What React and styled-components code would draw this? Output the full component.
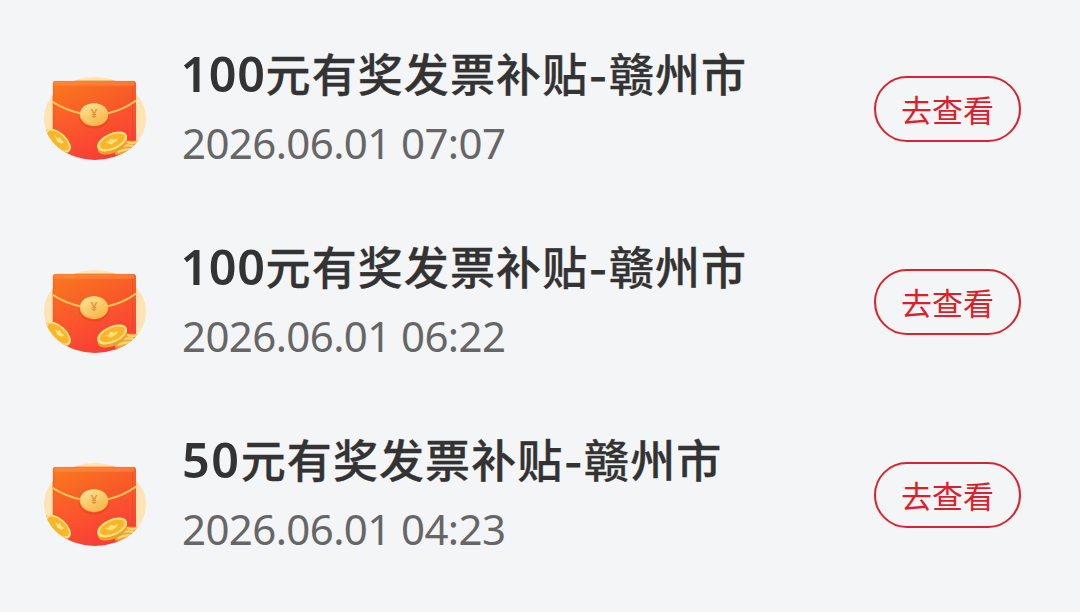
import React from 'react';
import styled, { createGlobalStyle } from 'styled-components';

const GlobalStyle = createGlobalStyle`
  body {
    margin: 0;
    background: #f4f5f7;
    font-family: 'Noto Sans', 'Noto Sans CJK SC', sans-serif;
  }
`;

const List = styled.div`
  box-sizing: border-box;
  height: 612px;
  padding: 31px 59px 0 44px;
  overflow: hidden;
`;

const Row = styled.div`
  display: flex;
  align-items: center;
  height: 156px;
  margin-bottom: 37px;
`;

const Packet = styled.svg`
  flex: none;
  width: 102px;
  height: 83px;
  margin-top: 19px;
`;

const Info = styled.div`
  flex: 1;
  padding-left: 36px;
  white-space: nowrap;
`;

const Title = styled.div`
  height: 68px;
  line-height: 64px;
  font-family: 'Noto Sans CJK SC', sans-serif;
  font-size: 45px;
  font-weight: 500;
  letter-spacing: 1.1px;
  color: #333;
  -webkit-text-stroke: 0.3px #333;
`;

const Amount = styled.span`
  margin-left: ${({ $long }) => ($long ? '-1.5px' : '0')};
  font-family: 'Noto Sans', sans-serif;
  font-size: 48.5px;
  font-weight: 600;
  letter-spacing: ${({ $long }) => ($long ? '0.6px' : '1.6px')};
  -webkit-text-stroke: 0;
`;

const Dash = styled.span`
  font-family: Inter, sans-serif;
  font-size: 42px;
  font-weight: 600;
  -webkit-text-stroke: 0;
`;

const Time = styled.div`
  height: 68px;
  line-height: 68px;
  font-size: 42px;
  letter-spacing: -0.6px;
  color: #666;
`;

const ViewButton = styled.button`
  box-sizing: border-box;
  flex: none;
  width: 147px;
  height: 66px;
  padding: 0 0 1px;
  border: 2px solid #d9232e;
  border-radius: 33px;
  background: transparent;
  font-family: 'Noto Sans CJK SC', sans-serif;
  font-size: 31px;
  line-height: 60px;
  color: #dc1f2a;
`;

const CoinMark = styled.text`
  font-family: 'Noto Sans', sans-serif;
  font-size: 35px;
  font-weight: 600;
  text-anchor: middle;
  fill: #e9923c;
`;

const RedPacket = ({ id }) => (
  <Packet viewBox="27 36 306 250" preserveAspectRatio="none">
    <defs>
      <linearGradient id={`${id}-body`} x1="0.2" y1="0" x2="0.6" y2="1">
        <stop offset="0" stopColor="#fb7420" />
        <stop offset="0.45" stopColor="#fb5a2b" />
        <stop offset="1" stopColor="#fa3938" />
      </linearGradient>
      <linearGradient id={`${id}-flap`} x1="0" y1="0" x2="1" y2="0.7">
        <stop offset="0" stopColor="#fb7c1c" />
        <stop offset="1" stopColor="#f4512a" />
      </linearGradient>
      <linearGradient id={`${id}-coin`} x1="0" y1="0" x2="0.7" y2="1">
        <stop offset="0" stopColor="#ffe89c" />
        <stop offset="1" stopColor="#f8b74a" />
      </linearGradient>
      <clipPath id={`${id}-clip`}>
        <ellipse cx="180" cy="161" rx="153" ry="125" />
        <rect x="53" y="47" width="250" height="110" rx="9" />
      </clipPath>
    </defs>
    <ellipse cx="180" cy="161" rx="153" ry="125" fill="#fee3b4" />
    <g clipPath={`url(#${id}-clip)`}>
      <rect x="53" y="47" width="250" height="250" rx="9" fill={`url(#${id}-body)`} />
      <path
        d="M53 113V56q0-9 9-9H294q9 0 9 9V108Q180 190 53 113Z"
        fill={`url(#${id}-flap)`}
        opacity="0.6"
      />
      <rect x="58" y="49" width="240" height="13" rx="4" fill="#ff9d59" opacity="0.4" />
      <path d="M293 62V285" stroke="#d63c2c" strokeWidth="2" opacity="0.5" />
      <path d="M57 62V285" stroke="#d63c2c" strokeWidth="2" opacity="0.3" />
      <path d="M53 111Q95 138 140 146" fill="none" stroke="#fbc355" strokeWidth="6" />
      <path d="M216 146Q264 135 303 107" fill="none" stroke="#fbc355" strokeWidth="6" />
      <ellipse cx="177" cy="156" rx="46" ry="36" fill="#d3351e" opacity="0.3" />
      <ellipse cx="177" cy="150" rx="43" ry="34" fill="#f4b64d" />
      <ellipse cx="177" cy="147" rx="41" ry="32" fill={`url(#${id}-coin)`} />
      <CoinMark x="177" y="161">¥</CoinMark>
      <g transform="rotate(42 70 228)">
        <ellipse cx="68" cy="233" rx="48" ry="25" fill="#e99a27" />
        <ellipse cx="69" cy="228" rx="47" ry="24" fill="#fde184" />
        <ellipse cx="69" cy="228" rx="40" ry="19" fill="#fab629" />
        <path d="M52 224L63 223L67 217L76 221L86 219L83 228L70 232Z" fill="#ffe28a" />
      </g>
      <path d="M242 239L278 228H310V270H240Z" fill="#f3a432" />
      <path
        d="M276 231Q290 239 309 231M252 249Q274 236 306 247M248 262Q280 247 306 259"
        fill="none"
        stroke="#fcd66f"
        strokeWidth="7"
      />
      <g transform="rotate(-24 232 232)">
        <ellipse cx="229" cy="239" rx="47" ry="25" fill="#ee9f2e" />
        <ellipse cx="232" cy="230" rx="48" ry="25" fill="#fce17e" />
        <ellipse cx="233" cy="230" rx="40" ry="19" fill="#fab52b" />
        <path d="M211 223L222 226L232 220L238 227L252 227L245 235L226 237Z" fill="#ffe07a" />
      </g>
    </g>
  </Packet>
);

const records = [
  { amount: 100, time: '2026.06.01 07:07' },
  { amount: 100, time: '2026.06.01 06:22' },
  { amount: 50, time: '2026.06.01 04:23' },
];

const App = () => (
  <>
    <GlobalStyle />
    <List>
      {records.map(({ amount, time }, index) => (
        <Row key={time}>
          <RedPacket id={`packet-${index}`} />
          <Info>
            <Title>
              <Amount $long={amount >= 100}>{amount}</Amount>元有奖发票补贴
              <Dash>-</Dash>赣州市
            </Title>
            <Time>{time}</Time>
          </Info>
          <ViewButton>去查看</ViewButton>
        </Row>
      ))}
    </List>
  </>
);

export default App;
